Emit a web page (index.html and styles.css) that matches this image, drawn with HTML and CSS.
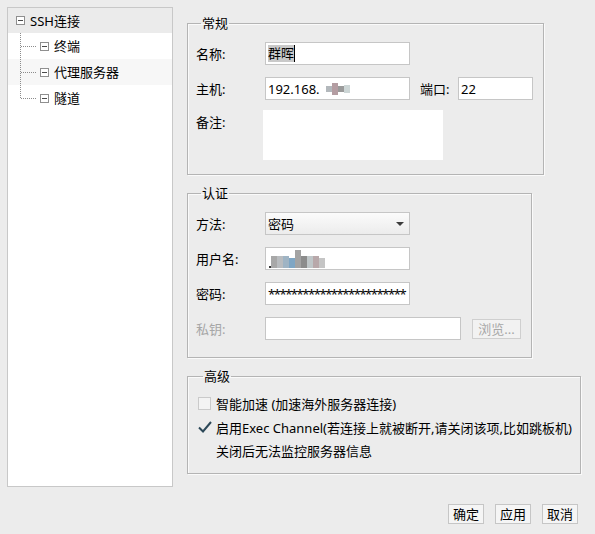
FILE: index.html
```html
<!DOCTYPE html>
<html lang="zh-CN">
<head>
<meta charset="utf-8">
<title>SSH连接</title>
<link rel="stylesheet" href="styles.css">
</head>
<body>
<div class="window">
  <div class="main">
    <div class="tree">
      <div class="node root">
        <span class="toggle"></span>
        <span class="node-text">SSH连接</span>
      </div>
      <div class="node child">
        <svg class="conn" width="20" height="26" viewBox="0 0 20 26"><path d="M0.5 0V26M1 13.5H17" stroke="#8c8c8c" stroke-dasharray="1 1" fill="none"/></svg>
        <span class="toggle"></span>
        <span class="node-text">终端</span>
      </div>
      <div class="node child hover">
        <svg class="conn" width="20" height="26" viewBox="0 0 20 26"><path d="M0.5 0V26M1 13.5H17" stroke="#8c8c8c" stroke-dasharray="1 1" fill="none"/></svg>
        <span class="toggle"></span>
        <span class="node-text">代理服务器</span>
      </div>
      <div class="node child">
        <svg class="conn" width="20" height="26" viewBox="0 0 20 26"><path d="M0.5 0V13M1 13.5H17" stroke="#8c8c8c" stroke-dasharray="1 1" fill="none"/></svg>
        <span class="toggle"></span>
        <span class="node-text">隧道</span>
      </div>
    </div>

    <div class="content">
      <fieldset class="group g-general">
        <legend>常规</legend>
        <div class="row">
          <span class="label">名称:</span>
          <div class="field w145"><span class="selected">群晖</span><span class="caret"></span></div>
        </div>
        <div class="row">
          <span class="label">主机:</span>
          <div class="field w145">192.168.<span class="mosaic host"><i style="background:#b3b8bc;height:6px"></i><i style="background:#b49da2;height:12px"></i><i style="background:#9a9a9a;height:6px"></i><i style="background:#cdd6d6;height:8px"></i></span></div>
          <span class="label port-label">端口:</span>
          <div class="field w75">22</div>
        </div>
        <div class="row top">
          <span class="label note-label">备注:</span>
          <div class="textarea"></div>
        </div>
      </fieldset>

      <fieldset class="group g-auth">
        <legend>认证</legend>
        <div class="row">
          <span class="label">方法:</span>
          <div class="select w145"><span>密码</span><span class="arrow"></span></div>
        </div>
        <div class="row">
          <span class="label">用户名:</span>
          <div class="field w145"><span class="mosaic user"><i style="background:#3a3a3a;height:2px;width:2px"></i><i style="background:#a8a8a8;height:12px"></i><i style="background:#b9bcbf;height:12px"></i><i style="background:#9fb4c4;height:12px"></i><i style="background:#7fa6c4;height:10px"></i><i style="background:#a3a3a3;height:18px"></i><i style="background:#8c8c8c;height:12px"></i><i style="background:#bfc6c8;height:12px"></i><i style="background:#b8a8aa;height:12px"></i><i style="background:#c5c5c5;height:10px"></i></span></div>
        </div>
        <div class="row">
          <span class="label">密码:</span>
          <div class="field w145 pwd">************************</div>
        </div>
        <div class="row">
          <span class="label disabled">私钥:</span>
          <div class="field w196"></div>
          <div class="btn browse">浏览...</div>
        </div>
      </fieldset>

      <fieldset class="group g-adv">
        <legend>高级</legend>
        <div class="check-row">
          <span class="checkbox"></span>
          <span>智能加速 (加速海外服务器连接)</span>
        </div>
        <div class="check-row">
          <svg class="check" width="14" height="14" viewBox="0 0 14 14"><path d="M1 7.5L5 11.5L13 2" stroke="#2c4858" stroke-width="2" fill="none"/></svg>
          <span>启用Exec Channel(若连接上就被断开,请关闭该项,比如跳板机)</span>
        </div>
        <div class="note-row">关闭后无法监控服务器信息</div>
      </fieldset>
    </div>
  </div>

  <div class="footer">
    <div class="btn">确定</div>
    <div class="btn">应用</div>
    <div class="btn">取消</div>
  </div>
</div>
</body>
</html>
```

FILE: styles.css
```css
* { box-sizing: border-box; }

html, body {
  margin: 0;
  padding: 0;
  background: #ececec;
}

body {
  width: 595px;
  height: 534px;
  overflow: hidden;
  font-family: "Noto Sans", "Noto Sans CJK SC", sans-serif;
  font-size: 13px;
  color: #000;
}

.window {
  padding: 7px 0 0 7px;
}

.main {
  display: flex;
  gap: 14px;
}

/* tree */
.tree {
  width: 166px;
  height: 480px;
  border: 1px solid #c8c8c8;
  background: #fff;
  display: flex;
  flex-direction: column;
  flex: none;
}

.node {
  display: flex;
  align-items: center;
  height: 26px;
  line-height: 16px;
  white-space: nowrap;
}

.node.root {
  height: 25px;
  padding-left: 8px;
  background: #ebebeb;
}

.node.child {
  padding-left: 12px;
}

.node.hover {
  background: #f7f7f7;
}

.conn {
  display: block;
  flex: none;
}

.toggle {
  width: 9px;
  height: 9px;
  border: 1px solid #8f8f8f;
  flex: none;
  display: flex;
  align-items: center;
  justify-content: center;
  background: #fff;
}

.toggle::after {
  content: "";
  width: 5px;
  height: 1px;
  background: #4a4a4a;
}

.node-text {
  margin-left: 5px;
}

/* groups */
.content {
  display: flex;
  flex-direction: column;
  flex: none;
}

.group {
  margin: 0;
  border: 1px solid #b4b4b4;
  box-shadow: 1px 1px 0 #fafafa, inset 1px 1px 0 #fafafa;
  padding: 0;
  min-width: 0;
}

.group legend {
  margin-left: 5px;
  padding: 0 1px;
  line-height: 16px;
  height: 16px;
}

.g-general {
  width: 357px;
  margin-top: 8px;
  padding: 11px 0 14px 8px;
}

.g-auth {
  width: 345px;
  margin-top: 10px;
  padding: 11px 0 17px 8px;
}

.g-adv {
  width: 394px;
  margin-top: 10px;
  padding: 9px 0 12px 10px;
}

.row {
  display: flex;
  align-items: center;
  height: 23px;
  margin-bottom: 12px;
}

.row:last-child {
  margin-bottom: 0;
}

.row.top {
  align-items: flex-start;
  height: 50px;
  margin-top: -2px;
}

.label {
  width: 69px;
  flex: none;
  white-space: nowrap;
}

.note-label {
  width: 67px;
  padding-top: 2px;
}

.label.disabled {
  color: #a6a6a6;
}

.port-label {
  width: 38px;
  margin-left: 10px;
}

.field {
  height: 23px;
  border: 1px solid #c6c6c6;
  background: #fff;
  padding: 0 2px;
  display: flex;
  align-items: center;
  white-space: nowrap;
  overflow: hidden;
  flex: none;
}

.w145 { width: 145px; }
.w75 { width: 75px; }
.w196 { width: 196px; }

.selected {
  background: #c9c9c9;
  line-height: 17px;
}

.caret {
  width: 1px;
  height: 17px;
  background: #000;
}

.textarea {
  width: 180px;
  height: 50px;
  background: #fff;
  flex: none;
}

.mosaic {
  display: inline-flex;
  align-items: flex-end;
  height: 18px;
}

.mosaic i {
  display: block;
  width: 6px;
}

.mosaic.host {
  margin-left: 6px;
  align-items: center;
}

.mosaic.user {
  margin-left: 1px;
}

.select {
  height: 23px;
  border: 1px solid #c6c6c6;
  background: linear-gradient(#fbfbfb, #ececec);
  padding: 0 2px;
  display: flex;
  align-items: center;
  justify-content: space-between;
  flex: none;
}

.arrow {
  width: 0;
  height: 0;
  border-left: 4px solid transparent;
  border-right: 4px solid transparent;
  border-top: 4px solid #3c3c3c;
  margin-right: 3px;
}

.pwd {
  letter-spacing: -1.45px;
  font-family: "Noto Sans", sans-serif;
}

.btn {
  height: 20px;
  width: 36px;
  border: 1px solid #c6c6c6;
  background: #f5f5f5;
  display: flex;
  align-items: center;
  justify-content: center;
  line-height: 16px;
  white-space: nowrap;
  flex: none;
}

.browse {
  width: 49px;
  margin-left: 11px;
  color: #a8a8a8;
  background: #f2f2f2;
  border-color: #cfcfcf;
}

.check-row {
  display: flex;
  align-items: center;
  height: 20px;
  margin-bottom: 4px;
  white-space: nowrap;
}

.checkbox {
  width: 13px;
  height: 13px;
  border: 1px solid #cacaca;
  background: #f3f3f3;
  margin-right: 5px;
  flex: none;
}

.check {
  display: block;
  margin-right: 4px;
  flex: none;
}

.note-row {
  height: 20px;
  line-height: 20px;
  padding-left: 18px;
  margin-top: 1px;
}

.footer {
  display: flex;
  justify-content: flex-end;
  gap: 11px;
  margin-top: 17px;
  padding-right: 17px;
}
```
